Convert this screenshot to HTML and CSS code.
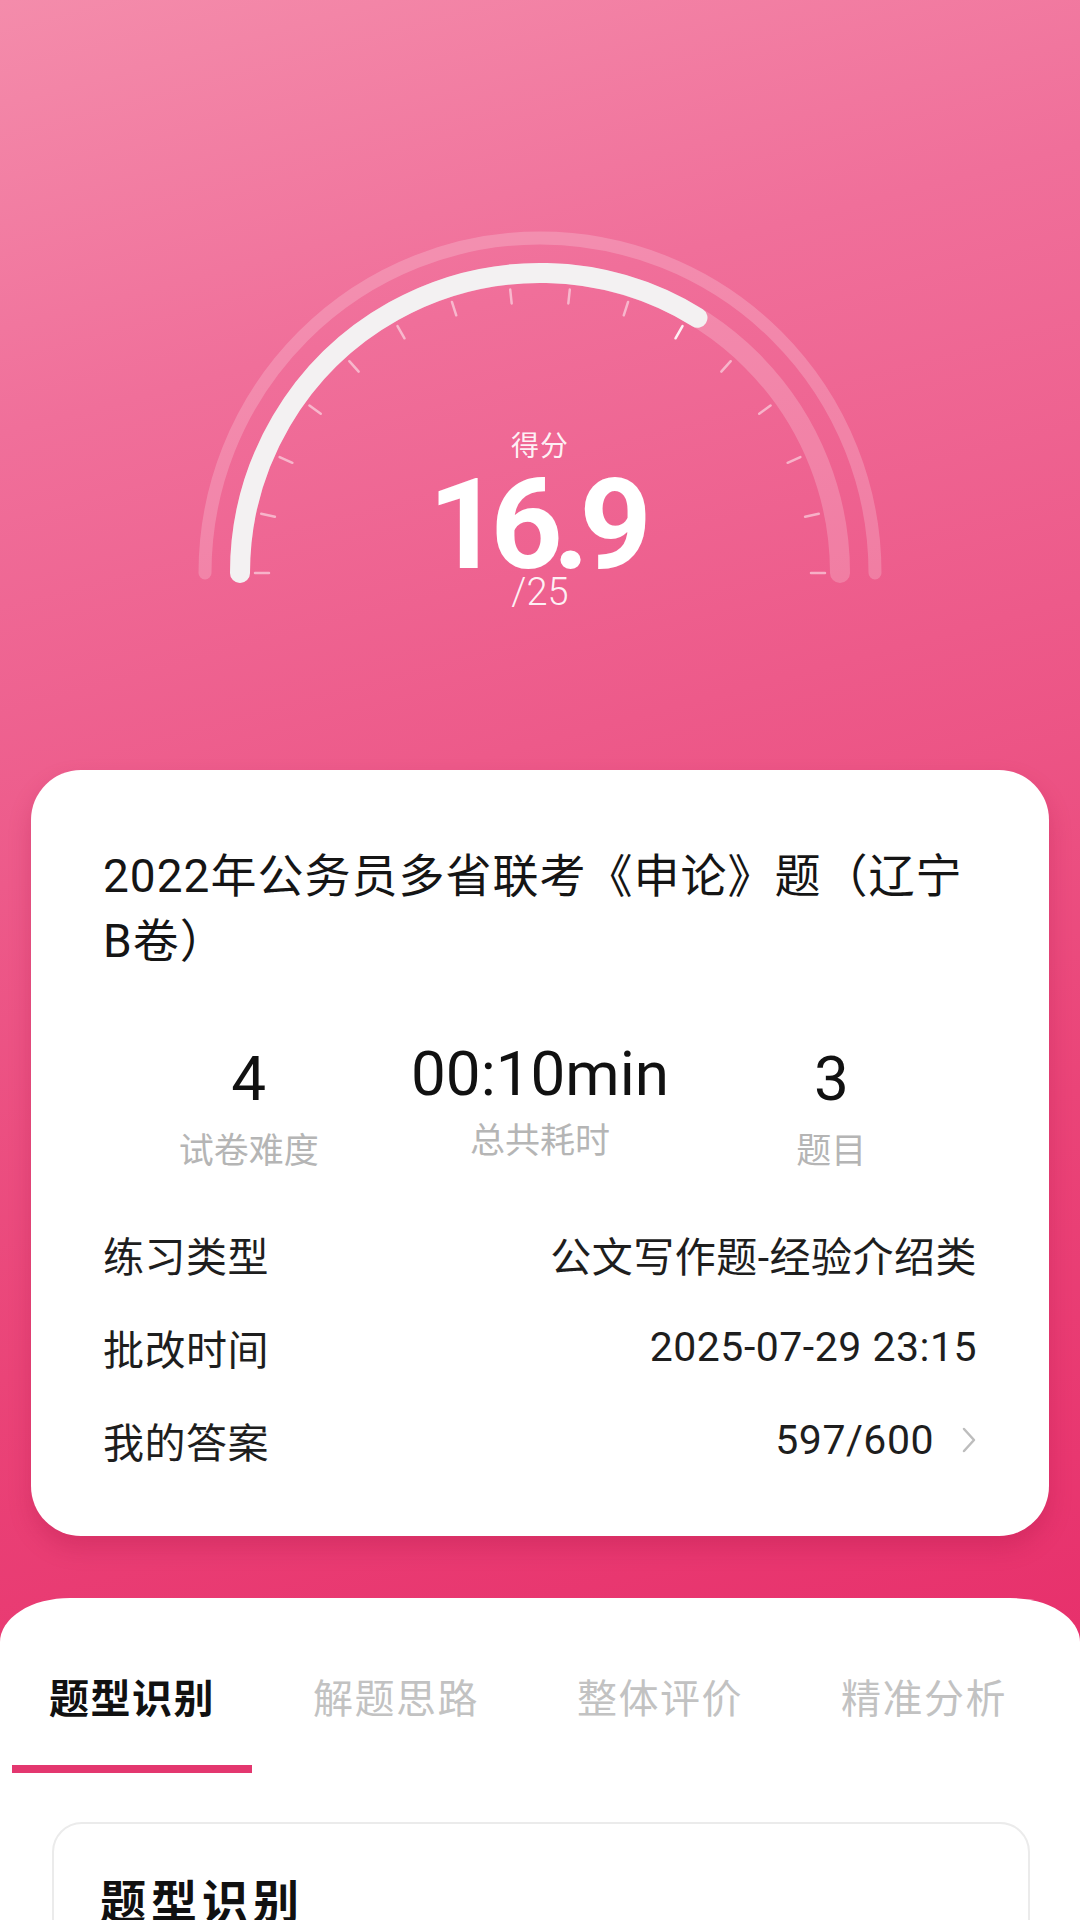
FILE: index.html
```html
<!DOCTYPE html>
<html lang="zh-CN">
<head>
<meta charset="utf-8">
<title>得分</title>
<link rel="stylesheet" href="styles.css">
</head>
<body>
<div class="page">
  <section class="hero">
    <div class="gauge">
      <svg class="gauge-svg" viewBox="0 0 720 400" width="720" height="400" xmlns="http://www.w3.org/2000/svg">
        <path class="arc-outer" d="M 25 350 A 335 335 0 0 1 695 350"/>
        <path class="arc-track" d="M 60 350 A 300 300 0 0 1 660 350"/>
        <g class="ticks">
          <line x1="75" y1="350" x2="89" y2="350" transform="rotate(0 360 350)"/>
          <line x1="75" y1="350" x2="89" y2="350" transform="rotate(12 360 350)"/>
          <line x1="75" y1="350" x2="89" y2="350" transform="rotate(24 360 350)"/>
          <line x1="75" y1="350" x2="89" y2="350" transform="rotate(36 360 350)"/>
          <line x1="75" y1="350" x2="89" y2="350" transform="rotate(48 360 350)"/>
          <line x1="75" y1="350" x2="89" y2="350" transform="rotate(60 360 350)"/>
          <line x1="75" y1="350" x2="89" y2="350" transform="rotate(72 360 350)"/>
          <line x1="75" y1="350" x2="89" y2="350" transform="rotate(84 360 350)"/>
          <line x1="75" y1="350" x2="89" y2="350" transform="rotate(96 360 350)"/>
          <line x1="75" y1="350" x2="89" y2="350" transform="rotate(108 360 350)"/>
          <line class="tick-hi" x1="75" y1="350" x2="89" y2="350" transform="rotate(120 360 350)"/>
          <line x1="75" y1="350" x2="89" y2="350" transform="rotate(132 360 350)"/>
          <line x1="75" y1="350" x2="89" y2="350" transform="rotate(144 360 350)"/>
          <line x1="75" y1="350" x2="89" y2="350" transform="rotate(156 360 350)"/>
          <line x1="75" y1="350" x2="89" y2="350" transform="rotate(168 360 350)"/>
          <line x1="75" y1="350" x2="89" y2="350" transform="rotate(180 360 350)"/>
        </g>
        <path class="arc-progress" d="M 60 350 A 300 300 0 0 1 517.5 94.7"/>
      </svg>
      <div class="gauge-text">
        <div class="score-label">得分</div>
        <div class="score-value">16.9</div>
        <div class="score-total">/25</div>
      </div>
    </div>

    <div class="card">
      <h1 class="card-title">2022年公务员多省联考《申论》题（辽宁<br>B卷）</h1>
      <div class="stats">
        <div class="stat">
          <div class="stat-num">4</div>
          <div class="stat-label">试卷难度</div>
        </div>
        <div class="stat stat-mid">
          <div class="stat-num">00:10min</div>
          <div class="stat-label">总共耗时</div>
        </div>
        <div class="stat">
          <div class="stat-num">3</div>
          <div class="stat-label">题目</div>
        </div>
      </div>
      <div class="rows">
        <div class="row">
          <span class="row-label">练习类型</span>
          <span class="row-value">公文写作题-经验介绍类</span>
        </div>
        <div class="row">
          <span class="row-label">批改时间</span>
          <span class="row-value">2025-07-29 23:15</span>
        </div>
        <div class="row">
          <span class="row-label">我的答案</span>
          <span class="row-value row-link">597/600
            <svg class="chev" viewBox="0 0 16 28" width="16" height="28" xmlns="http://www.w3.org/2000/svg"><path d="M3 3 L13 14 L3 25"/></svg>
          </span>
        </div>
      </div>
    </div>
  </section>

  <section class="sheet">
    <nav class="tabs">
      <div class="tab active"><span class="tab-text">题型识别</span><span class="tab-bar"></span></div>
      <div class="tab"><span class="tab-text">解题思路</span><span class="tab-bar"></span></div>
      <div class="tab"><span class="tab-text">整体评价</span><span class="tab-bar"></span></div>
      <div class="tab"><span class="tab-text">精准分析</span><span class="tab-bar"></span></div>
    </nav>
    <div class="panel">
      <h2 class="panel-title">题型识别</h2>
    </div>
  </section>
</div>
</body>
</html>
```

FILE: styles.css
```css
html, body {
  margin: 0;
  padding: 0;
  width: 1080px;
  height: 1920px;
  overflow: hidden;
}

body {
  font-family: Roboto, "Noto Sans CJK SC", "Noto Sans", sans-serif;
  color: #1a1a1a;
  background: linear-gradient(165deg, #f48cab 0%, #f06f9a 22%, #ed5a8a 45%, #ea4478 70%, #e72f6b 100%);
  background-size: 1080px 1680px;
  background-repeat: no-repeat;
  background-color: #ffffff;
}

.page {
  width: 1080px;
  height: 1920px;
  display: flex;
  flex-direction: column;
}

/* ---------- Hero / gauge ---------- */
.hero {
  display: flex;
  flex-direction: column;
}

.gauge {
  width: 720px;
  height: 400px;
  margin: 223px auto 0;
  display: grid;
}

.gauge > * {
  grid-area: 1 / 1;
}

.gauge-svg {
  display: block;
  width: 720px;
  height: 400px;
}

.arc-outer {
  fill: none;
  stroke: rgba(255, 255, 255, 0.2);
  stroke-width: 13;
  stroke-linecap: round;
}

.arc-track {
  fill: none;
  stroke: rgba(255, 255, 255, 0.2);
  stroke-width: 20;
  stroke-linecap: round;
}

.arc-progress {
  fill: none;
  stroke: #f3f1f2;
  stroke-width: 20;
  stroke-linecap: round;
}

.ticks line {
  stroke: rgba(255, 255, 255, 0.5);
  stroke-width: 2.5;
  stroke-linecap: round;
}

.ticks .tick-hi {
  stroke: rgba(255, 255, 255, 0.9);
}

.gauge-text {
  display: flex;
  flex-direction: column;
  align-items: center;
  padding-top: 207px;
  color: #ffffff;
}

.score-label {
  font-size: 28px;
  line-height: 34px;
  letter-spacing: 1px;
  color: rgba(255, 255, 255, 0.92);
}

.score-value {
  font-size: 126px;
  line-height: 100px;
  font-weight: 700;
  letter-spacing: -10px;
  margin-top: 11px;
  margin-left: -10px;
}

.score-total {
  font-size: 38px;
  line-height: 34px;
  font-weight: 300;
  color: rgba(255, 255, 255, 0.92);
}

/* ---------- Summary card ---------- */
.card {
  margin: 147px 31px 0;
  padding: 74px 72px 50px;
  background: #ffffff;
  border-radius: 50px;
  box-shadow: 0 12px 22px rgba(170, 20, 70, 0.28);
}

.card-title {
  margin: 0;
  font-size: 46px;
  line-height: 65px;
  font-weight: 400;
  letter-spacing: 1px;
  color: #151515;
}

.stats {
  margin-top: 68px;
  display: grid;
  grid-template-columns: repeat(3, 1fr);
  align-items: start;
}

.stat {
  display: flex;
  flex-direction: column;
  align-items: center;
}

.stat-num {
  font-size: 62px;
  line-height: 74px;
  color: #111111;
}

.stat-label {
  margin-top: 15px;
  font-size: 35px;
  line-height: 42px;
  color: #b5b5b5;
}

.stat-mid .stat-num {
  margin-top: -5px;
}

.stat-mid .stat-label {
  margin-top: 10px;
}

.rows {
  margin-top: 34px;
  display: flex;
  flex-direction: column;
}

.row {
  height: 93px;
  display: flex;
  align-items: center;
  justify-content: space-between;
  font-size: 41px;
  letter-spacing: 0.5px;
  color: #1e1e1e;
}

.row-link {
  display: flex;
  align-items: center;
  gap: 27px;
}

.chev {
  display: block;
  width: 16px;
  height: 28px;
}

.chev path {
  fill: none;
  stroke: #bdbdbd;
  stroke-width: 2.5;
  stroke-linecap: round;
  stroke-linejoin: round;
}

/* ---------- Bottom sheet ---------- */
.sheet {
  margin-top: 62px;
  flex: 1;
  background: #ffffff;
  border-radius: 70px 70px 0 0 / 44px 44px 0 0;
}

.tabs {
  display: flex;
  padding-top: 78px;
}

.tab {
  width: 264px;
  display: flex;
  flex-direction: column;
  align-items: center;
}

.tab-text {
  font-size: 40px;
  line-height: 48px;
  letter-spacing: 1.5px;
  color: #c2c2c2;
}

.tab-bar {
  display: block;
  width: 240px;
  height: 8px;
  margin-top: 41px;
  background: transparent;
}

.tab.active .tab-text {
  color: #111111;
  font-weight: 700;
}

.tab.active .tab-bar {
  background: #e3376f;
}

.panel {
  margin: 49px 50px 0 52px;
  padding: 50px 46px;
  height: 400px;
  border: 2px solid #ebebeb;
  border-radius: 30px;
}

.panel-title {
  margin: 0;
  font-size: 46px;
  line-height: 56px;
  font-weight: 700;
  letter-spacing: 5px;
  color: #111111;
}
```
